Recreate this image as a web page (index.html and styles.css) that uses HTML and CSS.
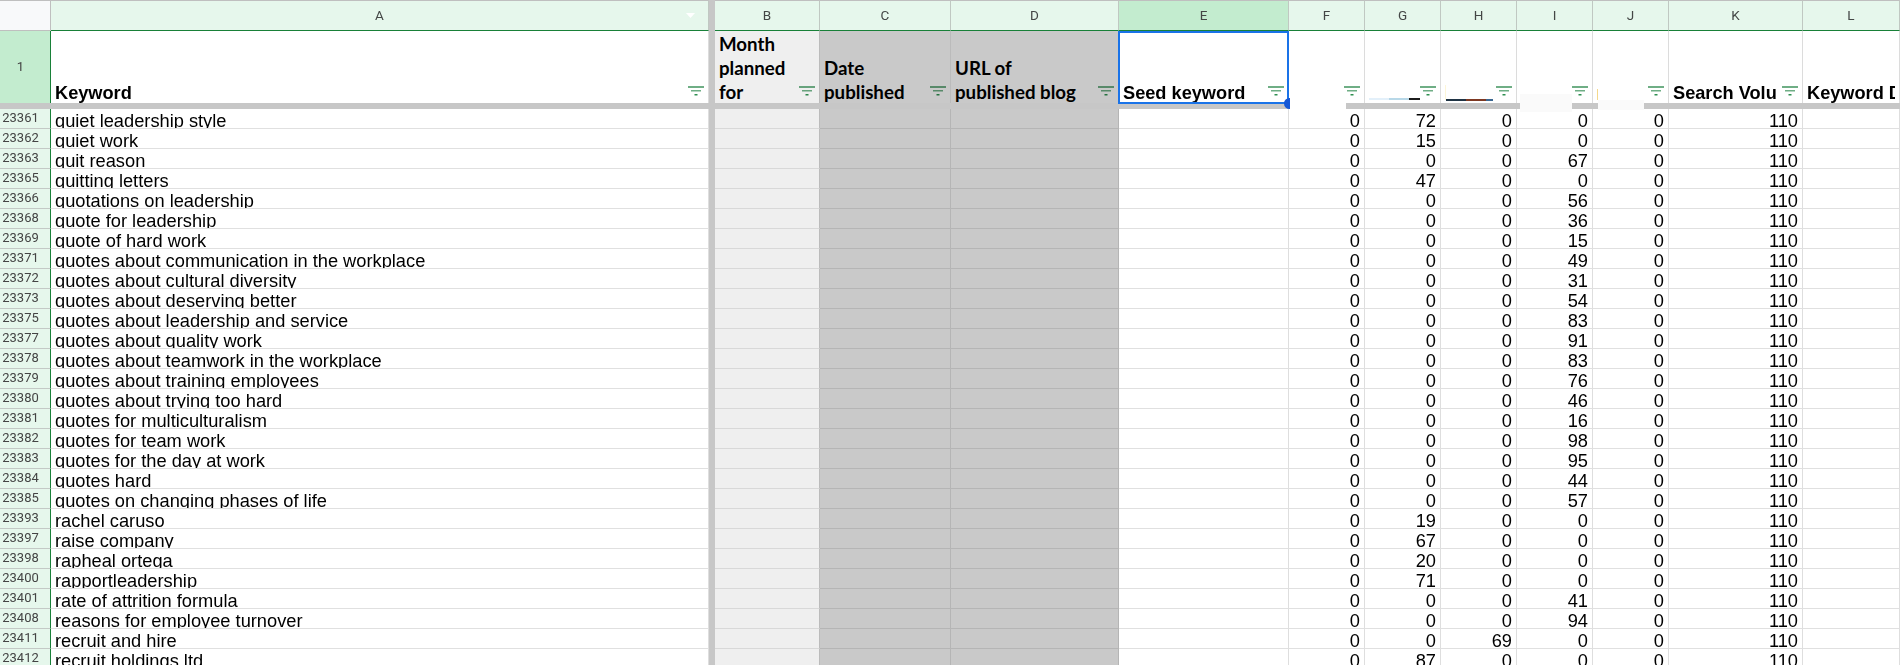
FILE: index.html
```html
<!DOCTYPE html>
<html lang="en">
<head>
<meta charset="utf-8">
<title>Keyword sheet</title>
<link rel="stylesheet" href="styles.css">
</head>
<body>
<div class="sheet">
  <div class="row colhead">
    <div class="corner"></div>
    <div class="ch">A<svg class="menu" width="9" height="5" viewBox="0 0 9 5"><polygon points="0,0 9,0 4.5,5" fill="#fff"/></svg></div>
    <div class="fz"></div>
    <div class="ch">B</div><div class="ch">C</div><div class="ch">D</div><div class="ch sel-col">E</div><div class="ch">F</div><div class="ch">G</div><div class="ch">H</div><div class="ch">I</div><div class="ch">J</div><div class="ch">K</div><div class="ch">L</div>
  </div>

  <div class="row tall">
    <div class="rh sel-row">1</div>
    <div class="hc"><span class="t">Keyword</span><svg class="flt" width="16" height="10"><use href="#funnel"/></svg></div>
    <div class="fz"></div>
    <div class="hc b"><span class="t lato">Month<br>planned<br>for</span><svg class="flt" width="16" height="10"><use href="#funnel"/></svg></div>
    <div class="hc g"><span class="t lato">Date<br>published</span><svg class="flt" width="16" height="10"><use href="#funnel"/></svg></div>
    <div class="hc g"><span class="t lato">URL of<br>published blog</span><svg class="flt" width="16" height="10"><use href="#funnel"/></svg></div>
    <div class="hc e"><span class="t">Seed keyword</span><svg class="flt" width="16" height="10"><use href="#funnel"/></svg><div class="selbox"></div></div>
    <div class="hc"><span class="t"></span><svg class="flt" width="16" height="10"><use href="#funnel"/></svg></div>
    <div class="hc"><span class="t"></span><svg class="flt" width="16" height="10"><use href="#funnel"/></svg><div class="bars bars-g"><i class="g1"></i><i class="g2"></i><i class="g3"></i></div></div>
    <div class="hc"><span class="t"></span><svg class="flt" width="16" height="10"><use href="#funnel"/></svg><div class="tick tick-h"></div><div class="bars bars-h"><i class="h1"></i><i class="h2"></i><i class="h3"></i></div></div>
    <div class="hc"><span class="t"></span><svg class="flt" width="16" height="10"><use href="#funnel"/></svg></div>
    <div class="hc"><span class="t"></span><svg class="flt" width="16" height="10"><use href="#funnel"/></svg><div class="tick tick-j"></div></div>
    <div class="hc"><span class="t">Search Volu</span><svg class="flt" width="16" height="10"><use href="#funnel"/></svg></div>
    <div class="hc"><span class="t">Keyword D</span></div>
  </div>

  <div class="band"><div class="band-l"></div><div class="band-gap"></div><div class="band-r"></div></div>

  <div class="row"><div class="rh">23361</div><div class="c kw">quiet leadership style</div><div class="fz"></div><div class="c b"></div><div class="c g"></div><div class="c g"></div><div class="c"></div><div class="c n">0</div><div class="c n">72</div><div class="c n">0</div><div class="c n">0</div><div class="c n">0</div><div class="c n">110</div><div class="c"></div></div>
  <div class="row"><div class="rh">23362</div><div class="c kw">quiet work</div><div class="fz"></div><div class="c b"></div><div class="c g"></div><div class="c g"></div><div class="c"></div><div class="c n">0</div><div class="c n">15</div><div class="c n">0</div><div class="c n">0</div><div class="c n">0</div><div class="c n">110</div><div class="c"></div></div>
  <div class="row"><div class="rh">23363</div><div class="c kw">quit reason</div><div class="fz"></div><div class="c b"></div><div class="c g"></div><div class="c g"></div><div class="c"></div><div class="c n">0</div><div class="c n">0</div><div class="c n">0</div><div class="c n">67</div><div class="c n">0</div><div class="c n">110</div><div class="c"></div></div>
  <div class="row"><div class="rh">23365</div><div class="c kw">quitting letters</div><div class="fz"></div><div class="c b"></div><div class="c g"></div><div class="c g"></div><div class="c"></div><div class="c n">0</div><div class="c n">47</div><div class="c n">0</div><div class="c n">0</div><div class="c n">0</div><div class="c n">110</div><div class="c"></div></div>
  <div class="row"><div class="rh">23366</div><div class="c kw">quotations on leadership</div><div class="fz"></div><div class="c b"></div><div class="c g"></div><div class="c g"></div><div class="c"></div><div class="c n">0</div><div class="c n">0</div><div class="c n">0</div><div class="c n">56</div><div class="c n">0</div><div class="c n">110</div><div class="c"></div></div>
  <div class="row"><div class="rh">23368</div><div class="c kw">quote for leadership</div><div class="fz"></div><div class="c b"></div><div class="c g"></div><div class="c g"></div><div class="c"></div><div class="c n">0</div><div class="c n">0</div><div class="c n">0</div><div class="c n">36</div><div class="c n">0</div><div class="c n">110</div><div class="c"></div></div>
  <div class="row"><div class="rh">23369</div><div class="c kw">quote of hard work</div><div class="fz"></div><div class="c b"></div><div class="c g"></div><div class="c g"></div><div class="c"></div><div class="c n">0</div><div class="c n">0</div><div class="c n">0</div><div class="c n">15</div><div class="c n">0</div><div class="c n">110</div><div class="c"></div></div>
  <div class="row"><div class="rh">23371</div><div class="c kw">quotes about communication in the workplace</div><div class="fz"></div><div class="c b"></div><div class="c g"></div><div class="c g"></div><div class="c"></div><div class="c n">0</div><div class="c n">0</div><div class="c n">0</div><div class="c n">49</div><div class="c n">0</div><div class="c n">110</div><div class="c"></div></div>
  <div class="row"><div class="rh">23372</div><div class="c kw">quotes about cultural diversity</div><div class="fz"></div><div class="c b"></div><div class="c g"></div><div class="c g"></div><div class="c"></div><div class="c n">0</div><div class="c n">0</div><div class="c n">0</div><div class="c n">31</div><div class="c n">0</div><div class="c n">110</div><div class="c"></div></div>
  <div class="row"><div class="rh">23373</div><div class="c kw">quotes about deserving better</div><div class="fz"></div><div class="c b"></div><div class="c g"></div><div class="c g"></div><div class="c"></div><div class="c n">0</div><div class="c n">0</div><div class="c n">0</div><div class="c n">54</div><div class="c n">0</div><div class="c n">110</div><div class="c"></div></div>
  <div class="row"><div class="rh">23375</div><div class="c kw">quotes about leadership and service</div><div class="fz"></div><div class="c b"></div><div class="c g"></div><div class="c g"></div><div class="c"></div><div class="c n">0</div><div class="c n">0</div><div class="c n">0</div><div class="c n">83</div><div class="c n">0</div><div class="c n">110</div><div class="c"></div></div>
  <div class="row"><div class="rh">23377</div><div class="c kw">quotes about quality work</div><div class="fz"></div><div class="c b"></div><div class="c g"></div><div class="c g"></div><div class="c"></div><div class="c n">0</div><div class="c n">0</div><div class="c n">0</div><div class="c n">91</div><div class="c n">0</div><div class="c n">110</div><div class="c"></div></div>
  <div class="row"><div class="rh">23378</div><div class="c kw">quotes about teamwork in the workplace</div><div class="fz"></div><div class="c b"></div><div class="c g"></div><div class="c g"></div><div class="c"></div><div class="c n">0</div><div class="c n">0</div><div class="c n">0</div><div class="c n">83</div><div class="c n">0</div><div class="c n">110</div><div class="c"></div></div>
  <div class="row"><div class="rh">23379</div><div class="c kw">quotes about training employees</div><div class="fz"></div><div class="c b"></div><div class="c g"></div><div class="c g"></div><div class="c"></div><div class="c n">0</div><div class="c n">0</div><div class="c n">0</div><div class="c n">76</div><div class="c n">0</div><div class="c n">110</div><div class="c"></div></div>
  <div class="row"><div class="rh">23380</div><div class="c kw">quotes about trying too hard</div><div class="fz"></div><div class="c b"></div><div class="c g"></div><div class="c g"></div><div class="c"></div><div class="c n">0</div><div class="c n">0</div><div class="c n">0</div><div class="c n">46</div><div class="c n">0</div><div class="c n">110</div><div class="c"></div></div>
  <div class="row"><div class="rh">23381</div><div class="c kw">quotes for multiculturalism</div><div class="fz"></div><div class="c b"></div><div class="c g"></div><div class="c g"></div><div class="c"></div><div class="c n">0</div><div class="c n">0</div><div class="c n">0</div><div class="c n">16</div><div class="c n">0</div><div class="c n">110</div><div class="c"></div></div>
  <div class="row"><div class="rh">23382</div><div class="c kw">quotes for team work</div><div class="fz"></div><div class="c b"></div><div class="c g"></div><div class="c g"></div><div class="c"></div><div class="c n">0</div><div class="c n">0</div><div class="c n">0</div><div class="c n">98</div><div class="c n">0</div><div class="c n">110</div><div class="c"></div></div>
  <div class="row"><div class="rh">23383</div><div class="c kw">quotes for the day at work</div><div class="fz"></div><div class="c b"></div><div class="c g"></div><div class="c g"></div><div class="c"></div><div class="c n">0</div><div class="c n">0</div><div class="c n">0</div><div class="c n">95</div><div class="c n">0</div><div class="c n">110</div><div class="c"></div></div>
  <div class="row"><div class="rh">23384</div><div class="c kw">quotes hard</div><div class="fz"></div><div class="c b"></div><div class="c g"></div><div class="c g"></div><div class="c"></div><div class="c n">0</div><div class="c n">0</div><div class="c n">0</div><div class="c n">44</div><div class="c n">0</div><div class="c n">110</div><div class="c"></div></div>
  <div class="row"><div class="rh">23385</div><div class="c kw">quotes on changing phases of life</div><div class="fz"></div><div class="c b"></div><div class="c g"></div><div class="c g"></div><div class="c"></div><div class="c n">0</div><div class="c n">0</div><div class="c n">0</div><div class="c n">57</div><div class="c n">0</div><div class="c n">110</div><div class="c"></div></div>
  <div class="row"><div class="rh">23393</div><div class="c kw">rachel caruso</div><div class="fz"></div><div class="c b"></div><div class="c g"></div><div class="c g"></div><div class="c"></div><div class="c n">0</div><div class="c n">19</div><div class="c n">0</div><div class="c n">0</div><div class="c n">0</div><div class="c n">110</div><div class="c"></div></div>
  <div class="row"><div class="rh">23397</div><div class="c kw">raise company</div><div class="fz"></div><div class="c b"></div><div class="c g"></div><div class="c g"></div><div class="c"></div><div class="c n">0</div><div class="c n">67</div><div class="c n">0</div><div class="c n">0</div><div class="c n">0</div><div class="c n">110</div><div class="c"></div></div>
  <div class="row"><div class="rh">23398</div><div class="c kw">rapheal ortega</div><div class="fz"></div><div class="c b"></div><div class="c g"></div><div class="c g"></div><div class="c"></div><div class="c n">0</div><div class="c n">20</div><div class="c n">0</div><div class="c n">0</div><div class="c n">0</div><div class="c n">110</div><div class="c"></div></div>
  <div class="row"><div class="rh">23400</div><div class="c kw">rapportleadership</div><div class="fz"></div><div class="c b"></div><div class="c g"></div><div class="c g"></div><div class="c"></div><div class="c n">0</div><div class="c n">71</div><div class="c n">0</div><div class="c n">0</div><div class="c n">0</div><div class="c n">110</div><div class="c"></div></div>
  <div class="row"><div class="rh">23401</div><div class="c kw">rate of attrition formula</div><div class="fz"></div><div class="c b"></div><div class="c g"></div><div class="c g"></div><div class="c"></div><div class="c n">0</div><div class="c n">0</div><div class="c n">0</div><div class="c n">41</div><div class="c n">0</div><div class="c n">110</div><div class="c"></div></div>
  <div class="row"><div class="rh">23408</div><div class="c kw">reasons for employee turnover</div><div class="fz"></div><div class="c b"></div><div class="c g"></div><div class="c g"></div><div class="c"></div><div class="c n">0</div><div class="c n">0</div><div class="c n">0</div><div class="c n">94</div><div class="c n">0</div><div class="c n">110</div><div class="c"></div></div>
  <div class="row"><div class="rh">23411</div><div class="c kw">recruit and hire</div><div class="fz"></div><div class="c b"></div><div class="c g"></div><div class="c g"></div><div class="c"></div><div class="c n">0</div><div class="c n">0</div><div class="c n">69</div><div class="c n">0</div><div class="c n">0</div><div class="c n">110</div><div class="c"></div></div>
  <div class="row"><div class="rh">23412</div><div class="c kw">recruit holdings ltd</div><div class="fz"></div><div class="c b"></div><div class="c g"></div><div class="c g"></div><div class="c"></div><div class="c n">0</div><div class="c n">87</div><div class="c n">0</div><div class="c n">0</div><div class="c n">0</div><div class="c n">110</div><div class="c"></div></div>

  <div class="patch patch-i"></div>
  <div class="patch patch-j"></div>
  <div class="handle"></div>
</div>

<svg class="defs" width="0" height="0" aria-hidden="true">
  <symbol id="funnel" viewBox="0 0 16 10">
    <rect x="0" y="0" width="16" height="2" fill="#6fae85"/>
    <rect x="3" y="4" width="10" height="1.5" fill="#6fae85"/>
    <rect x="6.5" y="8" width="3" height="1.5" fill="#2f8f50"/>
  </symbol>
</svg>
</body>
</html>
```
FILE: styles.css
```css
html, body {
  margin: 0;
  padding: 0;
  background: #fff;
}

body {
  height: 665px;
  overflow: hidden;
}

.sheet {
  position: relative;
  width: 1900px;
  height: 665px;
  overflow: hidden;
  font-family: "Liberation Sans", Arial, sans-serif;
  color: #000;
}

.row {
  display: grid;
  grid-template-columns: 51px 658px 6px 105px 131px 168px 170px 76px 76px 76px 76px 76px 134px 97px;
  height: 20px;
}

.defs {
  position: absolute;
}

/* column letters */
.colhead {
  height: 31px;
}

.corner {
  box-sizing: border-box;
  background: #f8f9fa;
  border-top: 1px solid #bfbfbf;
  border-right: 1px solid #bfbfbf;
  border-bottom: 1px solid #bfbfbf;
}

.ch {
  position: relative;
  box-sizing: border-box;
  display: flex;
  align-items: center;
  justify-content: center;
  background: #e6f7ec;
  border-top: 1px solid #bfbfbf;
  border-right: 1px solid #c0c8c2;
  border-bottom: 1px solid #188038;
  font: 13.5px/1 Roboto, "Liberation Sans", sans-serif;
  color: #444746;
}

.sel-col {
  background: #c3eccf;
}

.menu {
  position: absolute;
  right: 13px;
  top: 12px;
}

/* frozen-pane divider */
.fz {
  background: #c7c7c7;
}

/* frozen header row */
.tall {
  height: 72px;
}

.rh {
  box-sizing: border-box;
  display: flex;
  align-items: center;
  justify-content: center;
  padding-right: 9px;
  padding-bottom: 2px;
  background: #e6f7ec;
  border-right: 1px solid #188038;
  border-bottom: 1px solid #c4c9c6;
  font: 13px/1 Roboto, "Liberation Sans", sans-serif;
  color: #444;
}

.sel-row {
  background: #c3eccf;
  border-bottom: 0;
}

.hc {
  position: relative;
  box-sizing: border-box;
  display: flex;
  align-items: flex-end;
  min-width: 0;
  padding-left: 4px;
  padding-right: 4px;
  border-right: 1px solid #dcdcdc;
  font-size: 18.2px;
  font-weight: 700;
  line-height: 20px;
}

.t {
  flex: 1;
  min-width: 0;
  overflow: hidden;
  white-space: nowrap;
}

.lato {
  font-family: Lato, "Liberation Sans", sans-serif;
  font-size: 18.7px;
  line-height: 24px;
  margin-bottom: -1px;
  overflow: visible;
}

.flt {
  flex: none;
  margin-bottom: 7px;
  margin-left: 2px;
  mix-blend-mode: multiply;
}

.b {
  background: #efefef;
}

.g {
  background: #c9c9c9;
}

.hc.b,
.hc.g {
  border-right-color: #bbb;
}

.e {
  border-right-color: #dcdcdc;
}

.selbox {
  position: absolute;
  left: -1px;
  top: 0;
  right: -1px;
  bottom: -1px;
  border: 2px solid #1a73e8;
}

.handle {
  position: absolute;
  left: 1284px;
  top: 98px;
  width: 6px;
  height: 11px;
  border-radius: 6px 0 0 6px;
  background: #1558d6;
}

/* chart remnants in the header cells */
.bars {
  position: absolute;
  display: flex;
  height: 2px;
}

.bars i {
  display: block;
  height: 100%;
}

.bars-g {
  left: 4px;
  top: 67px;
}

.g1 {
  width: 20px;
  background: #e3f0fa;
}

.g2 {
  width: 20px;
  background: #b8d8e8;
}

.g3 {
  width: 11px;
  background: #1c1c1c;
}

.bars-h {
  left: 5px;
  top: 68px;
}

.h1 {
  width: 20px;
  background: #1f3344;
}

.h2 {
  width: 20px;
  background: #7d3822;
}

.h3 {
  width: 7px;
  background: #3a6690;
}

.tick {
  position: absolute;
  width: 1px;
}

.tick-h {
  left: 4px;
  top: 54px;
  height: 15px;
  background: #fdf6d8;
}

.tick-j {
  left: 4px;
  top: 58px;
  height: 11px;
  background: #f5d98b;
}

/* horizontal freeze band */
.band {
  display: flex;
  height: 6px;
}

.band-l {
  width: 1289px;
  background: #c7c7c7;
}

.band-gap {
  width: 57px;
}

.band-r {
  flex: 1;
  background: #c7c7c7;
}

.patch {
  position: absolute;
  background: #fafafa;
}

.patch-i {
  left: 1520px;
  top: 94px;
  width: 52px;
  height: 18px;
}

.patch-j {
  left: 1598px;
  top: 100px;
  width: 46px;
  height: 10px;
}

/* data cells */
.c {
  box-sizing: border-box;
  min-width: 0;
  overflow: hidden;
  border-right: 1px solid #dedede;
  border-bottom: 1px solid #e0e0e0;
  font-size: 18.25px;
  line-height: 24px;
  white-space: nowrap;
}

.c.b {
  border-right-color: #bbb;
  border-bottom-color: #d8d8d8;
}

.c.g {
  border-right-color: #b5b5b5;
  border-bottom-color: #b5b5b5;
}

.kw {
  padding-left: 4px;
}

.n {
  padding-right: 4px;
  text-align: right;
}
```
